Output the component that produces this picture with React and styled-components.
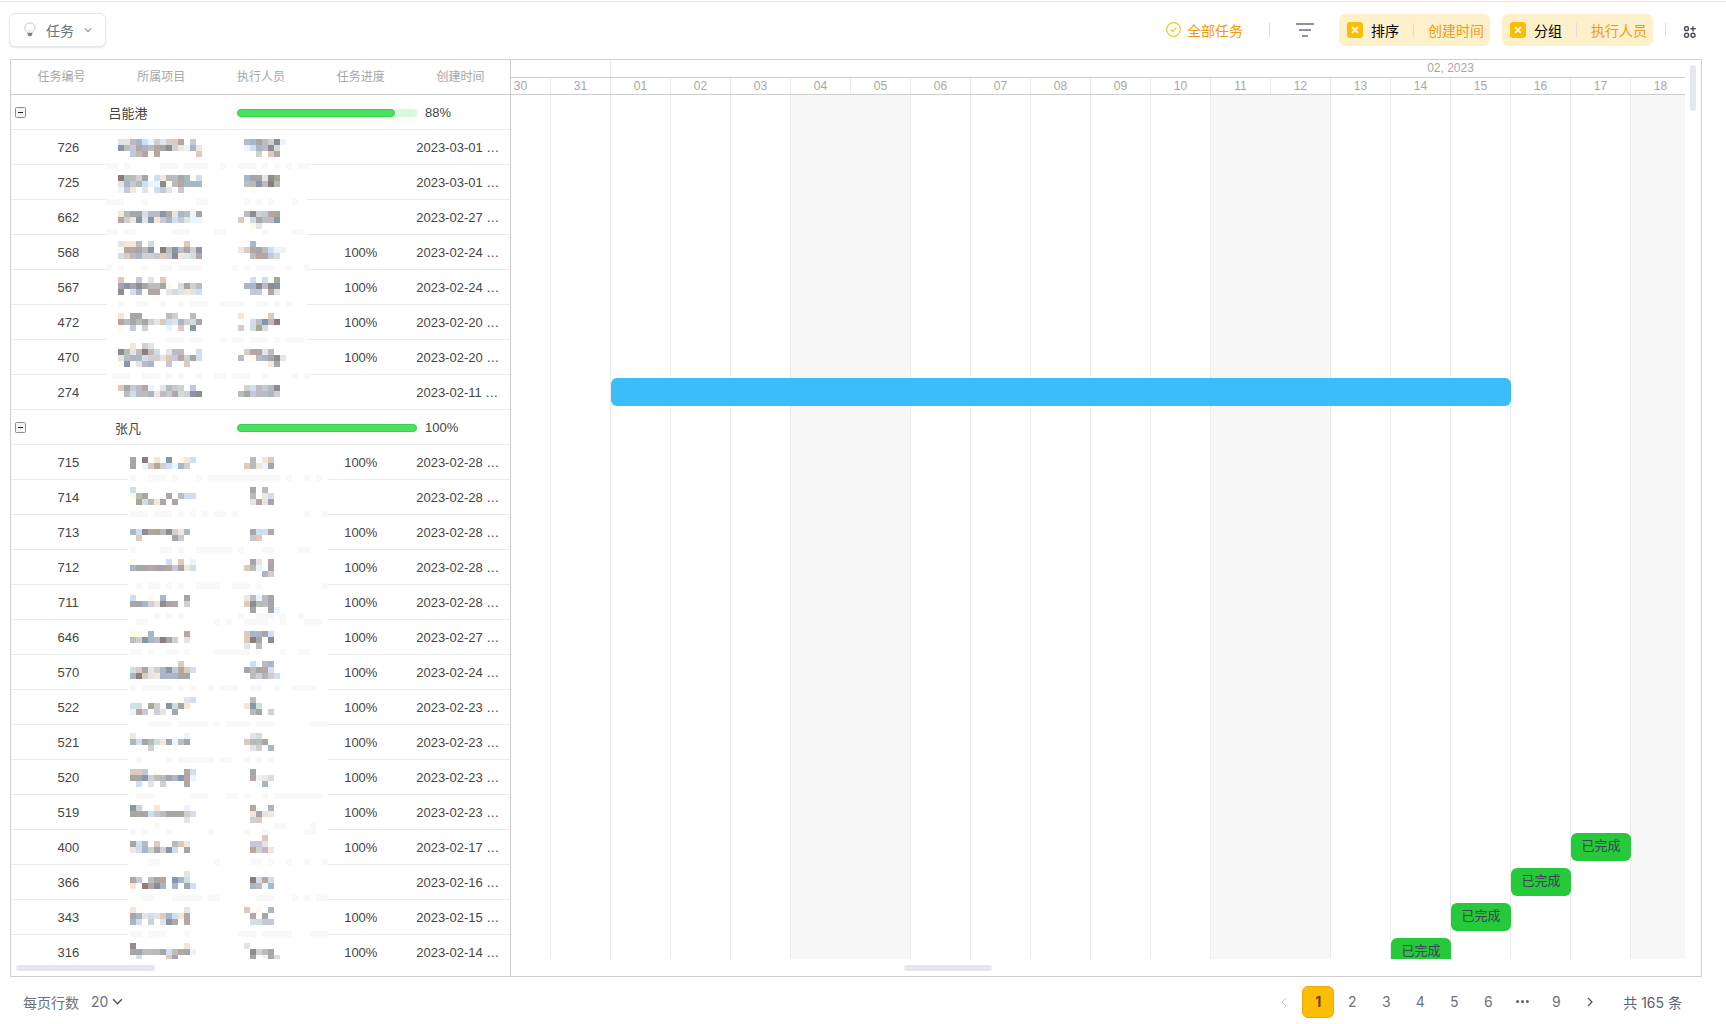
import React from "react";
import styled, { createGlobalStyle, css } from "styled-components";

const GlobalStyle = createGlobalStyle`
    * {
        box-sizing: border-box;
    }

    body {
        margin: 0;
        background-color: white;
        font-family: "Liberation Sans", "Noto Sans CJK SC", sans-serif;
    }

    button, select {
        font-family: inherit;
        border: none;
        background: none;
        padding: 0;
        cursor: pointer;
    }
`;

const Page = styled.div`
    display: flex;
    flex-direction: column;
    height: 100vh;
    padding-top: 1px;
`;

/* ---------- toolbar ---------- */

const Toolbar = styled.header`
    display: flex;
    align-items: center;
    justify-content: space-between;
    height: 58px;
    padding: 0 24px 2px 9px;
    border-top: 1px solid #e7e7e9;
    font-size: 14px;
`;

const ViewButton = styled.button`
    display: flex;
    align-items: center;
    gap: 8px;
    height: 34px;
    padding: 0 13px 0 12px;
    border: 1px solid #e5e7eb;
    border-radius: 6px;
    box-shadow: 0 1px 2px rgba(0, 0, 0, 0.1);
    background-color: white;
    color: #6b7280;
    font-size: 14px;
`;

const ChevronWrap = styled.span`
    display: flex;
    padding-left: 2px;
`;

const Tools = styled.div`
    display: flex;
    align-items: center;
`;

const AllTasks = styled.button`
    display: flex;
    align-items: center;
    gap: 6px;
    color: #f09a0c;
    font-size: 14px;
`;

const Divider = styled.span`
    width: 1px;
    height: 14px;
    margin: 0 ${(props) => props.$gap || 0}px;
    background-color: #d9dce3;
`;

const IconButton = styled.button`
    display: flex;
    align-items: center;
`;

const Pill = styled.div`
    display: flex;
    align-items: center;
    height: 32px;
    padding: 0 6px 0 8px;
    margin-left: ${(props) => props.$gap}px;
    border-radius: 6px;
    background-color: #fff0cc;
`;

const PillClose = styled.button`
    display: flex;
    align-items: center;
    justify-content: center;
    width: 16px;
    height: 16px;
    margin-right: 8px;
    border-radius: 3px;
    background-color: #fbbc05;
`;

const PillValue = styled.button`
    color: #f09a0c;
    font-size: 14px;
`;

/* ---------- gantt ---------- */

const Gantt = styled.main`
    display: flex;
    flex: 1;
    min-height: 0;
    margin: 0 24px 0 10px;
    border: 1px solid #cecece;
`;

const GridPane = styled.section`
    display: flex;
    flex-direction: column;
    flex: 0 0 500px;
    border-right: 1px solid #cecece;
`;

const GridBody = styled.div`
    position: relative;
    flex: 1;
    min-height: 0;
    overflow: hidden;
`;

const GridTable = styled.table`
    width: 100%;
    table-layout: fixed;
    border-collapse: separate;
    border-spacing: 0;
`;

const HeadCell = styled.th`
    height: 35px;
    padding: 0 0 3px 1px;
    border-bottom: 1px solid #cecece;
    color: #a6a6a6;
    font-size: 12px;
    font-weight: 400;
`;

const Cell = styled.td`
    height: 35px;
    padding: 0 0 0 ${(props) => props.$indent || 0}px;
    border-bottom: 1px solid #ebebeb;
    color: #454545;
    font-size: 13px;
    text-align: ${(props) => props.$align || "center"};
    white-space: nowrap;
`;

const GroupLine = styled.div`
    display: flex;
    align-items: center;
    padding: 1px 0 0 4px;
`;

const Toggle = styled.button`
    display: flex;
    width: 11px;
    height: 11px;
`;

const GroupName = styled.span`
    width: 80px;
    margin-left: 62px;
    text-align: center;
`;

const Progress = styled.div`
    width: 180px;
    height: 8px;
    margin: 0 8px 0 69px;
    border-radius: 4px;
    background-color: #d9f8dd;
    box-shadow: 0 2px 6px rgba(250, 190, 80, 0.12);
`;

const ProgressFill = styled.div`
    height: 8px;
    border: 1px solid #37cf4b;
    border-radius: 4px;
    background-color: #4be05f;
`;

const MosaicLayer = styled.svg`
    position: absolute;
    top: 0;
    left: 0;
    pointer-events: none;
`;

const ScrollGutter = styled.div`
    height: 17px;
    padding: 6px 0 0 ${(props) => props.$start};
`;

const ScrollThumb = styled.div`
    width: ${(props) => props.$w}px;
    height: ${(props) => props.$h}px;
    border-radius: 3px;
    background-color: #e4e7ed;
`;

const TimelinePane = styled.section`
    display: flex;
    flex-direction: column;
    flex: 1;
    min-width: 0;
`;

const TimelineMain = styled.div`
    display: flex;
    flex: 1;
    min-height: 0;
`;

const Timeline = styled.div`
    display: flex;
    flex-direction: column;
    flex: 1;
    min-width: 0;
    overflow: hidden;
`;

const VerticalGutter = styled.div`
    width: 16px;
    padding: 5px 0 0 5px;
`;

const Scale = styled.div`
    display: flex;
    flex: 0 0 ${(props) => props.$h}px;
    border-bottom: 1px solid #cecece;
    color: #a6a6a6;
    font-size: 12px;
    line-height: ${(props) => props.$h - 1}px;
`;

/* the first day is scrolled a third out of view */
const scrolled = css`
    &:first-child {
        margin-left: -20px;
    }
`;

const ScaleCell = styled.div`
    flex: 0 0 ${(props) => props.$days * 60}px;
    border-right: 1px solid #ebebeb;
    text-align: center;
    ${scrolled}
`;

const Canvas = styled.div`
    display: grid;
    flex: 1;
    min-height: 0;
    overflow: hidden;
`;

const DayColumns = styled.div`
    display: flex;
    grid-area: 1 / 1;
    min-width: 0;
    min-height: 0;
`;

const DayColumn = styled.div`
    flex: 0 0 60px;
    border-right: 1px solid ${(props) => (props.$joined ? "#f7f7f7" : "#ebebeb")};
    background-color: ${(props) => (props.$weekend ? "#f7f7f7" : "white")};
    ${scrolled}
`;

const BarRows = styled.div`
    grid-area: 1 / 1;
    min-width: 0;
    min-height: 0;
    margin-left: -20px;
`;

const BarRow = styled.div`
    height: 35px;
    padding-top: 3px;
`;

const Bar = styled.div`
    width: ${(props) => props.$days * 60}px;
    height: 28px;
    margin-left: ${(props) => props.$start * 60}px;
    border-radius: 6px;
    background-color: ${(props) => (props.$done ? "#25c93a" : "#3abdf8")};
    color: #3c4257;
    font-size: 13px;
    line-height: 26px;
    text-align: center;
`;

/* ---------- footer ---------- */

const Footer = styled.footer`
    display: flex;
    align-items: center;
    justify-content: space-between;
    height: 47px;
    padding: 2px 44px 0 23px;
    color: #6b7280;
    font-family: Inter, "Noto Sans CJK SC", sans-serif;
    font-size: 14px;
`;

const PageSize = styled.label`
    display: flex;
    align-items: center;
    gap: 12px;
`;

const SelectBox = styled.span`
    display: flex;
    align-items: center;
    gap: 3px;
`;

const SizeSelect = styled.select`
    appearance: none;
    color: #6b7280;
    font-size: 14px;
`;

const Pagination = styled.nav`
    display: flex;
    align-items: center;
    gap: 2px;
`;

const PageButton = styled.button`
    display: flex;
    align-items: center;
    justify-content: center;
    width: 32px;
    height: 32px;
    border: 1px solid ${(props) => (props.$active ? "#eba905" : "transparent")};
    border-radius: 6px;
    background-color: ${(props) => (props.$active ? "#fcbd04" : "transparent")};
    color: ${(props) => (props.$active ? "#713f12" : "#6b7280")};
    font-size: 14px;
    font-weight: ${(props) => (props.$active ? 700 : 400)};
`;

const Total = styled.span`
    margin-left: 15px;
    color: #5b6270;
`;

/* ---------- data ---------- */

const columns = ["任务编号", "所属项目", "执行人员", "任务进度", "创建时间"];

const rows = [
    { group: "吕能港", percent: 88 },
    { id: 726, date: "2023-03-01" },
    { id: 725, date: "2023-03-01" },
    { id: 662, date: "2023-02-27" },
    { id: 568, progress: "100%", date: "2023-02-24" },
    { id: 567, progress: "100%", date: "2023-02-24" },
    { id: 472, progress: "100%", date: "2023-02-20" },
    { id: 470, progress: "100%", date: "2023-02-20" },
    { id: 274, date: "2023-02-11", bar: { start: 2, days: 15 } },
    { group: "张凡", percent: 100 },
    { id: 715, progress: "100%", date: "2023-02-28" },
    { id: 714, date: "2023-02-28" },
    { id: 713, progress: "100%", date: "2023-02-28" },
    { id: 712, progress: "100%", date: "2023-02-28" },
    { id: 711, progress: "100%", date: "2023-02-28" },
    { id: 646, progress: "100%", date: "2023-02-27" },
    { id: 570, progress: "100%", date: "2023-02-24" },
    { id: 522, progress: "100%", date: "2023-02-23" },
    { id: 521, progress: "100%", date: "2023-02-23" },
    { id: 520, progress: "100%", date: "2023-02-23" },
    { id: 519, progress: "100%", date: "2023-02-23" },
    { id: 400, progress: "100%", date: "2023-02-17", bar: { start: 18, days: 1, label: "已完成" } },
    { id: 366, date: "2023-02-16", bar: { start: 17, days: 1, label: "已完成" } },
    { id: 343, progress: "100%", date: "2023-02-15", bar: { start: 16, days: 1, label: "已完成" } },
    { id: 316, progress: "100%", date: "2023-02-14", bar: { start: 15, days: 1, label: "已完成" } },
];

// 30 and 31 January, then 1 to 18 February
const februaryDays = Array.from({ length: 18 }, (_, i) => String(i + 1).padStart(2, "0"));
const days = ["30", "31", ...februaryDays];

/* Masked names. Every tile is 6px, one letter per tile colour. */
const tileColors = {
    a: "#e4e4e6", b: "#d0d0d0", c: "#bcbcc0", d: "#a6a6aa", e: "#8c8c92",
    l: "#cfdff0", m: "#a9b6c8", n: "#8796a8", p: "#f5e6da", q: "#dccabc",
    r: "#b5a6a0", s: "#8c7d79", t: "#e9f5fd", u: "#b3bdb6", v: "#fdfbea",
    w: "#c6c8d8", x: "#d2dedd", y: "#a8a89a",
};

// [tile row, project tiles, person tiles]
const firstTiles = [
    [0, "aacmltbabqr.w.", ".cmdcbet"],
    [1, "ncwrmcrdebptmp", ".tlmcex"],
    [2, "..wcr.r......q", "...b.qr"],
    [6, "sucbd.lpucdmvl", ".mddaey"],
    [7, "amwulttevurmmm", ".cuncsu"],
    [8, "twp.a.lwa.w...", "..v"],
    [12, "puddlccnramctd", ".cebwry"],
    [13, "rbpnanpwmlwatt", "q.xdccn"],
    [14, "", "..va"],
    [17, "appc.x.....q..", "..m"],
    [18, "vrrdcn.scncdbn", "pbrdcltt"],
    [19, "lqcmbbwqwepaxr", "..crrwx"],
    [23, "q..w.a.q......", "..l.l.y"],
    [24, "dndedccdv.xdbc", ".mmecen"],
    [25, "e.lm.rr.axapal", "..ww.ra"],
    [29, "p.dd....cb..c.", "p....q."],
    [30, "rcdudbaqlambxd", "..lcncs"],
    [31, "v.w.b...t.q.n.", "q.xyx.."],
    [34, "..p.ba........", ""],
    [35, "euacscx.acc..l", ".brrac."],
    [36, "acmmlbbaqwrbdl", "c.vcmdea"],
    [37, "vn.acm..w..q..", ".....pd"],
    [41, "qdwcrt.auwb.w.", ".blcwue"],
    [42, ".clccmpcwrxbne", "cdwccmb"],
];

const secondTiles = [
    [53, "d.s.p.n.vpl", ".u.pq"],
    [54, "d.tqrbltmb.", "quptd"],
    [58, "l..........", ".d.c."],
    [59, "vuy...r.cll", ".u.pl"],
    [60, ".yxupd.d...", ".arad"],
    [65, "mleryuebpm.", ".dllr"],
    [66, ".q.....dw..", ".wq.."],
    [70, "v.....l.q.t", ".da.r"],
    [71, "mydrddrwdpl", "qut.d"],
    [72, "", "...mq"],
    [76, "l..v.m...d.", "pctcd"],
    [77, "ddmbaedr.b.", "qeucd"],
    [78, "", ".d..dt"],
    [82, "vv.m.....r.", "qmmdl"],
    [83, "cbnmcsdb.a.", "qsd.e"],
    [84, "", "a.c"],
    [87, "........q..", ".l.cm"],
    [88, "lqyabmnwrql", "dcdrl"],
    [89, "msqapmmmdd.", ".cbmql"],
    [93, ".........al", ".c..."],
    [94, "lx.yb.nxdp.", "pnx.."],
    [95, "trw.ba.d...", ".ud.b"],
    [99, "p........t.", ".ax.."],
    [100, "mlduxpdtcd.", "qucd."],
    [101, "...b...v...", ".ab.m"],
    [105, "qqw.v....rl", ".d..."],
    [106, "ydnbcudmnrt", ".rtpl"],
    [107, ".l.a.b...r.", "...m."],
    [111, "nb..p....t.", ".r..m"],
    [112, "yydlwcddyql", ".pdap"],
    [113, ".........a.", ".bq"],
    [116, "", "...q."],
    [117, "dlu.q..uqp.", ".wwa."],
    [118, "plmbdbnl.d.", ".rbcp"],
    [122, ".........a.", ""],
    [123, "rw.cdr.nmx.", ".slrl"],
    [124, "p.srem.m.dl", ".mctm"],
    [128, "p........a.", "q.v.m"],
    [129, "dmalaqmlpr.", ".r.d."],
    [130, "ml.b.anr.r.", ".lxww"],
    [134, "e........p.", "a...."],
    [135, "ddccudlcrdt", ".ebcd"],
    [136, "vl....qd...", ".d.trl"],
];

// [tile row, first column, length, first column, length, ...]
const lineTiles = [
    [4, 0, 2, 3, 1, 9, 3, 13, 4, 19, 1, 22, 3, 26, 1, 28, 1, 30, 1, 32, 2],
    [10, 0, 3, 6, 1, 15, 2, 23, 1, 25, 1, 27, 1, 31, 1],
    [15, 0, 2, 3, 2, 11, 3, 18, 2, 26, 1, 31, 2],
    [21, 0, 1, 2, 1, 6, 1, 9, 2, 12, 4, 21, 1, 23, 1, 25, 3, 30, 1, 33, 1],
    [27, 2, 1, 5, 2, 9, 1, 12, 1, 14, 3, 19, 4, 25, 2, 28, 1, 30, 1],
    [33, 10, 3, 14, 2, 19, 1, 21, 2, 24, 3, 28, 1, 30, 3],
    [39, 1, 3, 6, 3, 10, 1, 12, 1, 15, 1, 18, 2, 21, 3, 26, 1, 31, 1, 33, 1],
    [56, 4, 1, 7, 3, 11, 1, 15, 1, 17, 12, 30, 1, 33, 1, 35, 1],
    [62, 4, 3, 8, 3, 12, 1, 14, 1, 16, 1, 18, 2, 21, 1, 33, 1, 36, 1],
    [68, 4, 1, 9, 2, 12, 1, 15, 6, 22, 1, 26, 2, 32, 2],
    [74, 5, 1, 7, 2, 10, 1, 12, 1, 15, 4, 21, 3, 25, 1, 36, 1],
    [79, 8, 1, 10, 1, 12, 1, 22, 1, 25, 3, 29, 1, 32, 1],
    [80, 5, 2, 18, 1, 20, 1, 23, 4, 29, 1, 33, 3],
    [85, 4, 2, 7, 1, 10, 2, 13, 1, 18, 4, 22, 2, 25, 1, 29, 1, 32, 2],
    [91, 4, 1, 6, 5, 12, 1, 14, 1, 17, 1, 19, 3, 24, 2, 28, 1, 31, 4],
    [97, 7, 4, 12, 5, 18, 1, 20, 4, 25, 3, 34, 3],
    [103, 5, 1, 10, 1, 12, 6, 19, 2, 23, 1, 25, 1, 27, 1],
    [109, 5, 3, 14, 3, 20, 2, 23, 1, 26, 1, 28, 8],
    [114, 8, 1, 28, 2, 34, 1],
    [115, 4, 1, 6, 1, 10, 1, 17, 1, 23, 1, 26, 1, 33, 2],
    [120, 7, 2, 18, 1, 24, 2, 27, 1, 30, 1, 33, 1, 36, 1],
    [126, 6, 2, 11, 5, 17, 2, 25, 3, 31, 1, 33, 1, 35, 2],
    [132, 4, 2, 7, 3, 13, 1, 22, 3, 26, 5, 34, 3],
];

const TILE = 6;
const tileX = (col) => 95 + col * TILE;
const tileY = (row) => 79 + row * TILE;

/* ---------- parts ---------- */

const drawTiles = (text, row, firstCol) =>
    text.split("").map((letter, i) =>
        letter === "." ? null : (
            <rect
                key={`${row}-${firstCol + i}`}
                x={tileX(firstCol + i)}
                y={tileY(row)}
                width={TILE}
                height={TILE}
                fill={tileColors[letter]}
            />
        )
    );

const Mosaic = () => (
    <MosaicLayer width="340" height="910" shapeRendering="crispEdges" aria-hidden="true">
        <rect x="96" y="100" width="200" height="220" fill="white" />
        <rect x="117" y="410" width="200" height="480" fill="white" />
        {lineTiles.map(([row, ...runs]) =>
            runs.map((col, i) =>
                i % 2 ? null : (
                    <rect
                        key={`${row}-${i}`}
                        x={tileX(col)}
                        y={tileY(row)}
                        width={runs[i + 1] * TILE}
                        height={TILE}
                        fill="#f8f8f8"
                    />
                )
            )
        )}
        {firstTiles.map(([row, project, person]) => [drawTiles(project, row, 2), drawTiles(person, row, 22)])}
        {secondTiles.map(([row, project, person]) => [drawTiles(project, row, 4), drawTiles(person, row, 23)])}
    </MosaicLayer>
);

const BulbIcon = () => (
    <svg width="16" height="16" viewBox="0 0 16 16" fill="none">
        <path
            d="M5.8 11.2c0-1.6-3-2.4-3-5.2a5.1 5.1 0 0 1 10.2 0c0 2.8-3 3.6-3 5.2"
            stroke="#c3c6cc"
        />
        <path d="M5.6 10.8h4.6v2L9 14.2H6.8l-1.2-1.4z" fill="#7b8190" />
        <path d="M6.2 8l1.7 1.4L9.6 8M7.9 9.4v1.4" stroke="#d3d6db" />
    </svg>
);

const ChevronDown = ({ size, color }) => (
    <svg width={size} height={size} viewBox="0 0 10 10" fill="none" stroke={color} strokeWidth="1.4">
        <path d="M1 3l4 4 4-4" />
    </svg>
);

const FilterPill = ({ name, value, gap }) => (
    <Pill $gap={gap}>
        <PillClose aria-label={`清除${name}`}>
            <svg width="8" height="8" viewBox="0 0 8 8" stroke="#fff6dd" strokeWidth="1.8">
                <path d="M1 1l6 6M7 1L1 7" />
            </svg>
        </PillClose>
        <span>{name}</span>
        <Divider $gap={14} />
        <PillValue>{value}</PillValue>
    </Pill>
);

const GridRow = ({ row }) => {
    if (row.group) {
        return (
            <tr>
                <Cell colSpan={5} $align="left">
                    <GroupLine>
                        <Toggle aria-label="收起">
                            <svg width="11" height="11" viewBox="0 0 11 11">
                                <rect x="0.5" y="0.5" width="10" height="10" rx="1" fill="#f4f4f4" stroke="#8e8e8e" />
                                <path d="M3 5.5h5" stroke="#222" />
                            </svg>
                        </Toggle>
                        <GroupName>{row.group}</GroupName>
                        <Progress>
                            <ProgressFill style={{ width: `${row.percent}%` }} />
                        </Progress>
                        <span>{row.percent}%</span>
                    </GroupLine>
                </Cell>
            </tr>
        );
    }
    return (
        <tr>
            <Cell $indent={15}>{row.id}</Cell>
            <Cell />
            <Cell />
            <Cell $indent={1}>{row.progress}</Cell>
            <Cell $align="left" $indent={6}>{row.date} …</Cell>
        </tr>
    );
};

const isWeekend = (i) => i > 1 && ((i - 2) % 7 === 3 || (i - 2) % 7 === 4);

const App = () => {
    return (
        <>
            <GlobalStyle />
            <Page>
                <Toolbar>
                    <ViewButton>
                        <BulbIcon />
                        任务
                        <ChevronWrap>
                            <ChevronDown size={8} color="#8b909b" />
                        </ChevronWrap>
                    </ViewButton>
                    <Tools>
                        <AllTasks>
                            <svg width="15" height="15" viewBox="0 0 15 15" fill="none" stroke="#fbc21c" strokeWidth="1.2">
                                <circle cx="7.5" cy="7.5" r="6.8" />
                                <path d="M4.7 7.7l2 1.8 3.6-3.8" />
                            </svg>
                            全部任务
                        </AllTasks>
                        <Divider $gap={26} />
                        <IconButton aria-label="筛选">
                            <svg width="18" height="14" viewBox="0 0 18 14" stroke="#6b7280" strokeWidth="1.7">
                                <path d="M0 1h18M3 7h12M6 13h6" />
                            </svg>
                        </IconButton>
                        <FilterPill name="排序" value="创建时间" gap={25} />
                        <FilterPill name="分组" value="执行人员" gap={12} />
                        <Divider $gap={12} />
                        <IconButton aria-label="更多视图">
                            <svg width="24" height="20" viewBox="0 0 24 20" fill="none" stroke="#474c5c" strokeWidth="1.4">
                                <rect x="6.7" y="6.7" width="3.6" height="3.8" rx="1" />
                                <path d="M12.4 8.8h5.2M15 6.2v5.2" />
                                <circle cx="8.6" cy="15.2" r="2" />
                                <circle cx="15" cy="15.2" r="2" />
                            </svg>
                        </IconButton>
                    </Tools>
                </Toolbar>

                <Gantt>
                    <GridPane>
                        <GridBody>
                            <GridTable>
                                <thead>
                                    <tr>
                                        {columns.map((name) => (
                                            <HeadCell key={name}>{name}</HeadCell>
                                        ))}
                                    </tr>
                                </thead>
                                <tbody>
                                    {rows.map((row) => (
                                        <GridRow key={row.id || row.group} row={row} />
                                    ))}
                                </tbody>
                            </GridTable>
                            <Mosaic />
                        </GridBody>
                        <ScrollGutter $start="5px">
                            <ScrollThumb $w={139} $h={6} />
                        </ScrollGutter>
                    </GridPane>

                    <TimelinePane>
                        <TimelineMain>
                            <Timeline>
                                <Scale $h={18}>
                                    <ScaleCell $days={2} />
                                    <ScaleCell $days={28}>02, 2023</ScaleCell>
                                </Scale>
                                <Scale $h={17}>
                                    {days.map((day) => (
                                        <ScaleCell key={day} $days={1}>{day}</ScaleCell>
                                    ))}
                                </Scale>
                                <Canvas>
                                    <DayColumns>
                                        {days.map((day, i) => (
                                            <DayColumn
                                                key={day}
                                                $weekend={isWeekend(i)}
                                                $joined={isWeekend(i) && isWeekend(i + 1)}
                                            />
                                        ))}
                                    </DayColumns>
                                    <BarRows>
                                        {rows.map((row) => (
                                            <BarRow key={row.id || row.group}>
                                                {row.bar && (
                                                    <Bar $start={row.bar.start} $days={row.bar.days} $done={row.bar.label}>
                                                        {row.bar.label}
                                                    </Bar>
                                                )}
                                            </BarRow>
                                        ))}
                                    </BarRows>
                                </Canvas>
                            </Timeline>
                            <VerticalGutter>
                                <ScrollThumb $w={6} $h={46} />
                            </VerticalGutter>
                        </TimelineMain>
                        <ScrollGutter $start="33%">
                            <ScrollThumb $w={88} $h={6} />
                        </ScrollGutter>
                    </TimelinePane>
                </Gantt>

                <Footer>
                    <PageSize>
                        每页行数
                        <SelectBox>
                            <SizeSelect defaultValue="20">
                                <option>20</option>
                                <option>50</option>
                            </SizeSelect>
                            <ChevronDown size={11} color="#4b5563" />
                        </SelectBox>
                    </PageSize>
                    <Pagination aria-label="分页">
                        <PageButton aria-label="上一页">
                            <svg width="6" height="10" viewBox="0 0 6 10" fill="none" stroke="#c0c4cc">
                                <path d="M5 1L1 5l4 4" />
                            </svg>
                        </PageButton>
                        <PageButton $active>1</PageButton>
                        {[2, 3, 4, 5, 6].map((page) => (
                            <PageButton key={page}>{page}</PageButton>
                        ))}
                        <PageButton aria-label="更多页">
                            <svg width="13" height="3" viewBox="0 0 13 3" fill="#5d6370">
                                <circle cx="1.6" cy="1.5" r="1.5" />
                                <circle cx="6.5" cy="1.5" r="1.5" />
                                <circle cx="11.4" cy="1.5" r="1.5" />
                            </svg>
                        </PageButton>
                        <PageButton>9</PageButton>
                        <PageButton aria-label="下一页">
                            <svg width="6" height="10" viewBox="0 0 6 10" fill="none" stroke="#4b5563" strokeWidth="1.2">
                                <path d="M1 1l4 4-4 4" />
                            </svg>
                        </PageButton>
                        <Total>共 165 条</Total>
                    </Pagination>
                </Footer>
            </Page>
        </>
    );
};

export default App;
